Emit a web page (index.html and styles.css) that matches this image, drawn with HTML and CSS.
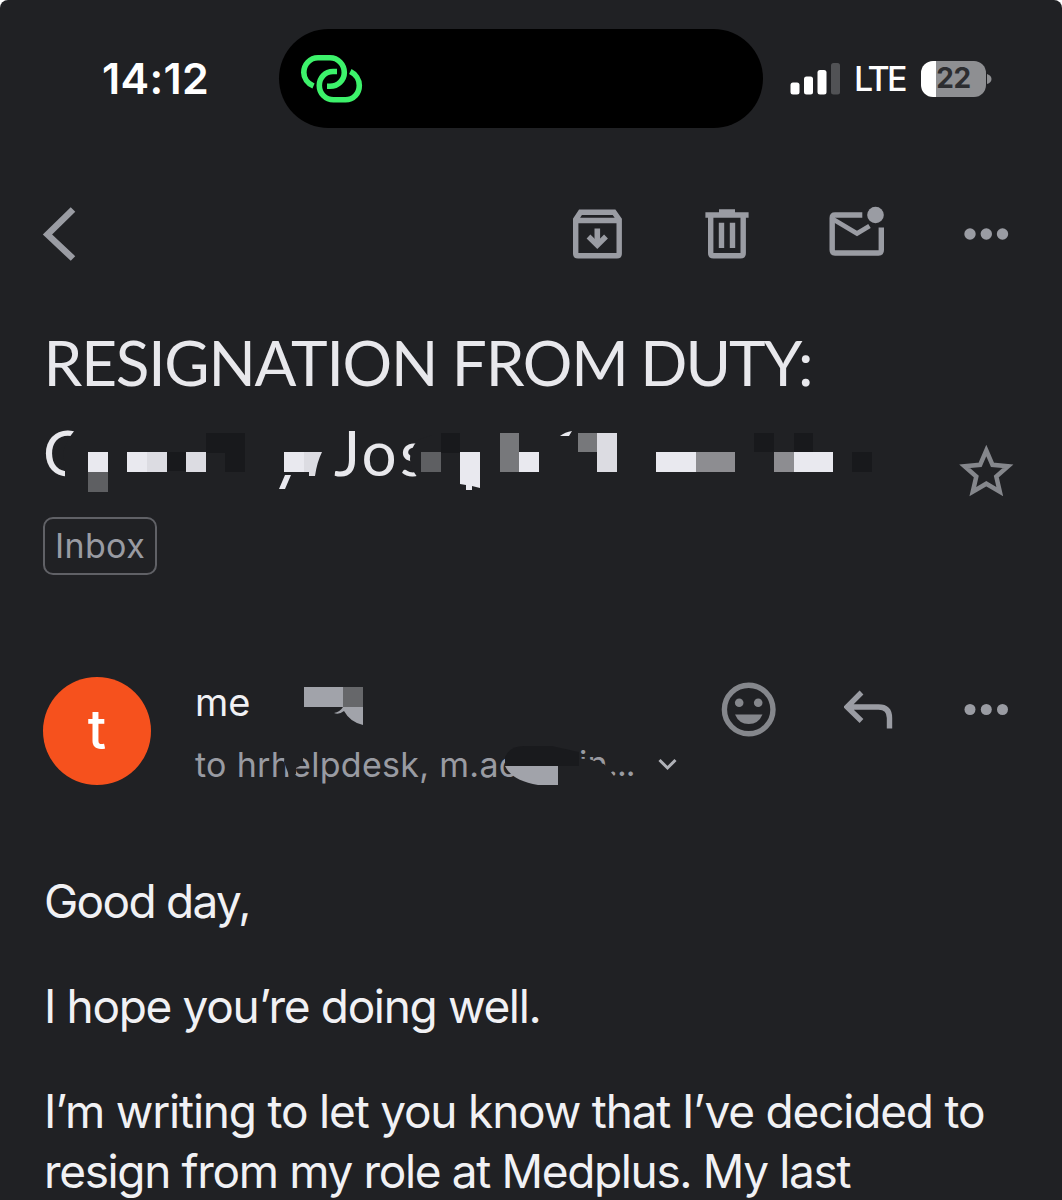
FILE: index.html
```html
<!DOCTYPE html>
<html lang="en">
<head>
<meta charset="utf-8">
<title>Mail</title>
<link rel="stylesheet" href="styles.css">
</head>
<body>
<main class="screen">
  <header class="status">
    <div class="clock"><span>14:12</span></div>
    <div class="island">
      <svg class="link" width="66" height="54" viewBox="299 52 66 54" fill="none" stroke="#3df26b" stroke-width="5.6">
        <path d="M313.5 86 C307.500 83.500 303.800 78 303.800 72.500 C303.800 64.500 310 57.800 318 57.800 H330 C338 57.800 344.300 64.500 344.300 72.500 C344.300 80 338 86.300 330 86.300 H327"/>
        <path d="M337 71.500 H333 C325 71.500 319.300 78 319.300 85.500 C319.300 93.500 325.500 99.800 333.500 99.800 H345.500 C353.500 99.800 359.300 93.500 359.300 85.500 C359.300 79.500 355.500 74 350.300 71.500"/>
      </svg>
    </div>
    <div class="signals">
      <svg width="50" height="34" viewBox="790 61 50 34" fill="#fff">
        <rect x="790.500" y="81.500" width="9" height="12" rx="2.500"/>
        <rect x="804" y="75.500" width="9" height="18" rx="2.500"/>
        <rect x="817.500" y="69" width="9" height="24.500" rx="2.500"/>
        <rect x="831" y="62" width="9" height="31.500" rx="2.500" fill="#515255"/>
      </svg>
      <span class="network">LTE</span>
      <div class="battery"><span>22</span></div>
      <svg class="nub" width="5" height="12" viewBox="0 0 5 12"><path d="M0 1 Q4.500 2.500 4.500 6 Q4.500 9.500 0 11 Z" fill="#8e8f92"/></svg>
    </div>
  </header>

  <nav class="toolbar">
    <svg width="40" height="60" viewBox="40 204 40 60" fill="none" stroke="#9a9ca3" stroke-width="6.500"><path d="M73 209.500 L47.500 234.500 L73 258.500"/></svg>
    <div class="actions">
      <svg width="52" height="60" viewBox="571 204 52 60" fill="none" stroke="#9a9ca3">
        <path d="M575.700 219.500 L580.500 212.200 H614 L619.200 219.500 V253.500 Q619.200 255.800 617 255.800 H578 Q575.700 255.800 575.700 253.500 Z M575.700 220.500 H619" stroke-width="5.400"/>
        <path d="M597.300 228.500 V243" stroke-width="5.600"/><path d="M588.500 236.500 L597.300 245.200 L606 236.500" stroke-width="5.400"/>
      </svg>
      <svg class="trash" width="46" height="60" viewBox="704 204 46 60" fill="none" stroke="#9a9ca3" stroke-width="5.400">
        <path d="M705.400 215 H748.600"/><path d="M719 211.500 H735" stroke-width="4.500"/>
        <path d="M710.700 215 V253 Q710.700 255.800 713.500 255.800 H740.500 Q743.200 255.800 743.200 253 V215 M721.500 222.700 V248 M732.500 222.700 V248"/>
      </svg>
      <svg class="unread" width="58" height="60" viewBox="828 204 58 60" fill="none" stroke="#9a9ca3" stroke-width="5.400">
        <path d="M862.300 215 H835 Q832.200 215 832.200 218 V250 Q832.200 253 835 253 H878.500 Q881.300 253 881.300 250 V227.500"/>
        <path d="M833.500 219.500 L857 233.500 L869.500 226" stroke-width="4.800"/><circle cx="875.500" cy="215" r="8.300" fill="#9a9ca3" stroke="none"/>
      </svg>
      <svg class="more" width="48" height="60" viewBox="962 204 48 60" fill="#9a9ca3"><circle cx="970" cy="234" r="5.700"/><circle cx="986.300" cy="234" r="5.700"/><circle cx="1002.500" cy="234" r="5.700"/></svg>
    </div>
  </nav>

  <section class="subject">
    <h1>RESIGNATION FROM <span class="tight">DUTY:</span></h1>
    <svg class="redacted" width="1062" height="90" viewBox="0 418 1062 90">
      <text class="subject-text" x="43" y="476">O</text>
      <path d="M75 425 H100 V485 H65 V470 Q58 450 75 430Z" fill="#202124"/>
      <text class="subject-text" x="334 361.500 400" y="476">Jos</text>
      <path d="M418 440 Q402 458 418 478 H432 V435 Z" fill="#202124"/>
      <g fill="#18191c"><path d="M206 433h39v39h-20v-19h-19z M167 452h19v19h-19z M441 433h19v20h-19z M754 433h20v19h-20z M794 433h19v19h-19z M852 452h20v20h-20z"/></g>
      <g fill="#e9e9ef"><path d="M88 452h20v20H88z M127 452h20v20h-20z M284 452h20v20h-20z M460 452h20v36l-8-2v4h-6v-5l-6-1z M519 452h20v20h-20z M656 452h40v20h-40z M794 452h39v20h-39z M291 475h-6l-6 14h6z M560 436q5-4 12-5l-3 5z"/></g>
      <g fill="#dcdce2"><path d="M147 452h20v20h-20z M186 452h20v20h-20z M304 452h18q-5 10-7 24h-6v-4h-5z M597 433h20v39h-20z"/></g>
      <g fill="#77787b"><path d="M500 433h19v39h-19z M578 433h19v19h-19z"/></g>
      <path d="M88 472h20v20H88z M421 452h20v20h-20z" fill="#5e5f62"/>
      <path d="M696 452h39v20h-39z M774 452h20v20h-20z" fill="#8d8d91"/>
      <path d="M986.300 450.500 L992.500 464.800 L1008 466.200 L996.300 476.500 L999.800 491.700 L986.300 483.700 L972.800 491.700 L976.300 476.500 L964.600 466.200 L980.100 464.800Z" fill="none" stroke="#85878c" stroke-width="4.500"/>
    </svg>
    <span class="chip">Inbox</span>
  </section>

  <section class="sender">
    <div class="avatar">t</div>
    <div class="people">
      <div class="from"><span>me</span>
        <svg width="62" height="40" viewBox="303 686 62 40"><path d="M304 687h39v20h-39z" fill="#a1a3aa"/><path d="M343 687h20v20h-20z" fill="#66676a"/><path d="M343 707h20v18q-13-3-19-14q-5 4-10 2q6-1 9-6" fill="#a1a3aa"/></svg>
      </div>
      <div class="to"><span class="recipients">to hrhelpdesk, m.ac</span>
        <svg class="smudge" width="500" height="60" viewBox="195 735 500 60">
          <path d="M285 750 H300 Q305 758 302 765 L296 768 V774 L290 778 L284 762Z" fill="#202124"/>
          <text class="to-text" x="579" y="776">in</text><text class="to-text dots" x="608" y="776">...</text>
          <path d="M575 759 Q590 758 594 761 L604 764 L614 776 L608 784 H575Z" fill="#202124"/>
          <path d="M505 766 V757 Q510 746 524 746 H552 Q570 750 579 752 V766Z" fill="#191a1d"/>
          <path d="M505 766 H558 V785 H538 Q512 781 505 766Z" fill="#a1a3aa"/>
          <path d="M659.500 760 L667.500 768 L675.500 760" fill="none" stroke="#b0b2b8" stroke-width="3"/>
        </svg>
      </div>
    </div>
    <div class="reply">
      <svg width="58" height="60" viewBox="720 680 58 60"><circle cx="748.700" cy="709.500" r="24.300" fill="none" stroke="#85878c" stroke-width="5.400"/><g fill="#85878c"><circle cx="739.200" cy="702.800" r="4.300"/><circle cx="758.200" cy="702.800" r="4.300"/><path d="M735 714.500h27.500q-4 9.500-13.750 9.500t-13.750-9.500"/></g></svg>
      <svg width="52" height="60" viewBox="843.500 680 52 60" fill="none" stroke="#9a9ca3" stroke-width="5.400"><path d="M861 692.500 L846.500 707 L861 721 M847 707 H878 Q889 707 889 718 V728.500"/></svg>
      <svg width="48" height="60" viewBox="962 680 48 60" fill="#9a9ca3"><circle cx="970" cy="709.500" r="5.500"/><circle cx="986.300" cy="709.500" r="5.500"/><circle cx="1002.500" cy="709.500" r="5.500"/></svg>
    </div>
  </section>

  <article class="message">
    <p class="greeting">Good day,</p>
    <p class="wish">I hope you’re doing well.</p>
    <p>I’m writing to let you know that I’ve decided to<br><span class="second">resign from my role at Medplus. My last</span></p>
  </article>
</main>
</body>
</html>
```

FILE: styles.css
```css
* { box-sizing: border-box; }
body { margin: 0; background: #fff; }
svg { display: block; flex: none; }
.screen {
  height: 1200px;
  overflow: hidden;
  border-radius: 8px 8px 0 0;
  background: #202124;
  color: #f1f1f4;
  font-family: Inter, "Liberation Sans", sans-serif;
}
.status {
  display: grid;
  grid-template-columns: 279px 484px 1fr;
  height: 204px;
  padding-top: 29px;
  align-items: start;
  color: #fff;
}
.clock { height: 99px; padding-left: 102px; line-height: 99px; font-size: 43px; font-weight: 600; letter-spacing: 0.3px; white-space: nowrap; }
.island { height: 99px; padding: 23px 20px; border-radius: 50px; background: #000; }
.signals { display: flex; align-items: center; height: 99px; padding-left: 27px; }
.network { width: 66px; margin-left: 14px; font-size: 34px; font-weight: 500; letter-spacing: -2.6px; }
.battery {
  width: 65px;
  height: 36px;
  margin-left: 1px;
  border-radius: 12px;
  background: linear-gradient(90deg, #fff 15px, #8e8f92 15px);
  color: #2c2d30;
  font-size: 28px;
  font-weight: 700;
  line-height: 35px;
  text-align: center;
  letter-spacing: -0.5px;
}
.nub { margin-left: 1px; }
.toolbar { display: flex; justify-content: space-between; height: 113px; padding: 0 52px 0 40px; }
.actions { display: flex; }
.trash { margin-left: 81px; }
.unread { margin-left: 78px; }
.more { margin-left: 76px; }
.subject { height: 360px; }
h1, .subject-text { font-family: Lato, sans-serif; font-size: 62px; font-weight: 400; }
h1 { height: 90px; margin: 0 0 11px 43.5px; line-height: 91px; letter-spacing: -1.2px; white-space: nowrap; color: #e8e8ec; }
.tight { margin-left: -2px; letter-spacing: -2px; }
.subject-text { fill: #e8e8ec; }
.chip {
  display: block;
  width: 114px;
  height: 58px;
  margin: 9px 0 0 43px;
  border: 2px solid #606166;
  border-radius: 10px;
  color: #999ba2;
  font-size: 34px;
  line-height: 53px;
  letter-spacing: 0.4px;
  text-align: center;
}
.sender { display: flex; height: 195px; padding: 0 52px 0 43px; }
.avatar { flex: none; width: 108px; height: 108px; border-radius: 50%; background: #f6511d; color: #fff; font-size: 54px; font-weight: 500; line-height: 106px; text-align: center; }
.people { flex: none; width: 569px; padding-left: 44px; }
.from { display: grid; grid-template-columns: 108px 62px; height: 58px; padding-top: 9px; line-height: 33px; font-size: 38px; }
.to { position: relative; height: 60px; line-height: 59px; white-space: nowrap; color: #999ba2; font-size: 34px; letter-spacing: 0.3px; }
.to-text { fill: #999ba2; font-size: 34px; }
.dots { letter-spacing: -0.9px; }
.smudge { position: absolute; left: 0; top: 0; }
.reply { display: flex; flex: 1; justify-content: space-between; padding-top: 3px; }
.message { padding-left: 44px; font-size: 46px; line-height: 59.5px; letter-spacing: -1.2px; white-space: nowrap; }
.message p { margin: 0 0 45.5px; }
.message .greeting { letter-spacing: -1.7px; }
.message .wish { letter-spacing: -1.35px; }
.second { letter-spacing: -1.36px; }
```
